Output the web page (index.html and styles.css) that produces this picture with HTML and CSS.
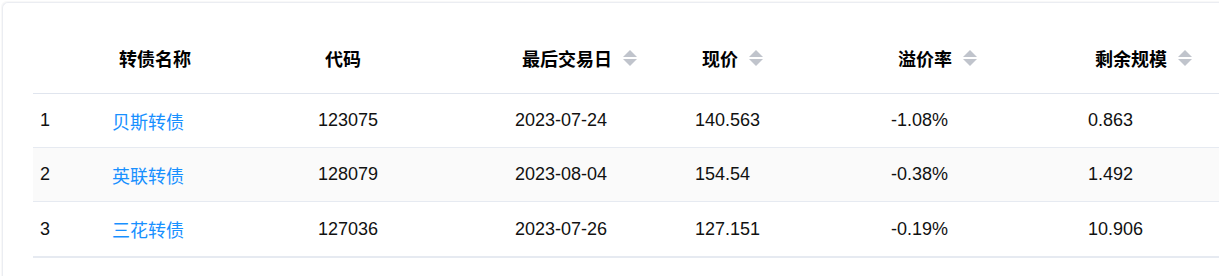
FILE: index.html
```html
<!DOCTYPE html>
<html lang="zh">
<head>
<meta charset="utf-8">
<title>转债</title>
<link rel="stylesheet" href="styles.css">
</head>
<body>
<div class="card">
  <table class="bonds">
    <colgroup>
      <col class="c-idx"><col class="c-name"><col class="c-code"><col class="c-date"><col class="c-price"><col class="c-prem"><col class="c-size">
    </colgroup>
    <thead>
      <tr>
        <th></th>
        <th>转债名称</th>
        <th>代码</th>
        <th><span class="hd">最后交易日<span class="sort"><i class="up"></i><i class="down"></i></span></span></th>
        <th><span class="hd">现价<span class="sort"><i class="up"></i><i class="down"></i></span></span></th>
        <th><span class="hd">溢价率<span class="sort"><i class="up"></i><i class="down"></i></span></span></th>
        <th><span class="hd">剩余规模<span class="sort"><i class="up"></i><i class="down"></i></span></span></th>
      </tr>
    </thead>
    <tbody>
      <tr>
        <td>1</td><td><a class="link">贝斯转债</a></td><td>123075</td><td>2023-07-24</td><td>140.563</td><td>-1.08%</td><td>0.863</td>
      </tr>
      <tr class="stripe">
        <td>2</td><td><a class="link">英联转债</a></td><td>128079</td><td>2023-08-04</td><td>154.54</td><td>-0.38%</td><td>1.492</td>
      </tr>
      <tr class="last">
        <td>3</td><td><a class="link">三花转债</a></td><td>127036</td><td>2023-07-26</td><td>127.151</td><td>-0.19%</td><td>10.906</td>
      </tr>
    </tbody>
  </table>
</div>
</body>
</html>
```

FILE: styles.css
```css
html, body {
  margin: 0;
  padding: 0;
  overflow: hidden;
  background: #ffffff;
}
body {
  padding: 2px 0 0 2px;
  font-family: "Liberation Sans", "Noto Sans CJK SC", sans-serif;
  font-size: 18px;
  color: #111;
}
.card {
  width: 1320px;
  min-height: 320px;
  box-sizing: border-box;
  border-top: 1px solid #ebedf2;
  border-left: 1px solid #ebedf2;
  border-radius: 6px 0 0 0;
  box-shadow: -1px -1px 1px rgba(0, 0, 0, 0.03);
  background: #fff;
  padding: 20px 0 0 30px;
}
.bonds {
  table-layout: fixed;
  border-collapse: collapse;
  width: 1250px;
}
.c-idx { width: 72px; }
.c-name { width: 206px; }
.c-code { width: 197px; }
.c-date { width: 180px; }
.c-price { width: 196px; }
.c-prem { width: 197px; }
.c-size { width: 202px; }

.bonds th {
  height: 70px;
  padding: 0 0 0 14px;
  text-align: left;
  font-weight: 700;
  color: #000;
  border-bottom: 1px solid #e0e5ee;
  vertical-align: middle;
  white-space: nowrap;
}
.bonds td {
  height: 53px;
  padding: 0 0 0 7px;
  border-bottom: 1px solid #e6eaf1;
  vertical-align: middle;
  white-space: nowrap;
}
.bonds tr.last td {
  height: 54px;
  border-bottom: 2px solid #e6eaf1;
}
.bonds tr.stripe td {
  background: #fafafa;
}
.link {
  color: #1890ff;
  text-decoration: none;
}
.hd {
  display: inline-flex;
  align-items: center;
}
.sort {
  display: inline-flex;
  flex-direction: column;
  gap: 2px;
  margin-left: 11px;
}
.sort i {
  display: block;
  width: 0;
  height: 0;
  border-left: 7px solid transparent;
  border-right: 7px solid transparent;
}
.sort .up {
  border-bottom: 7px solid #c0c4cc;
}
.sort .down {
  border-top: 7px solid #c0c4cc;
}
```
